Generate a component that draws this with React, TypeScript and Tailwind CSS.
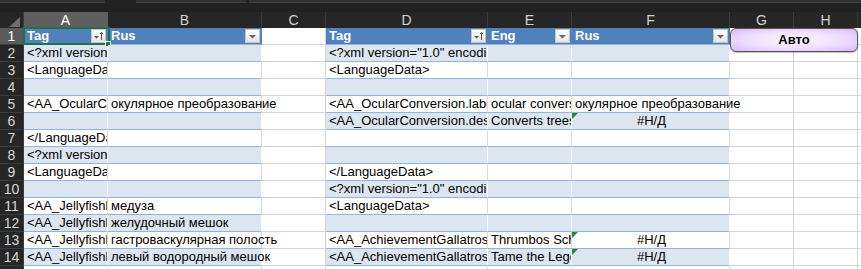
import React from 'react';

type Row = {
  a?: string;
  b?: string;
  d?: string;
  e?: string;
  f?: string;
  fOver?: boolean;
  fCenter?: boolean;
  tri?: boolean;
};

const XML = '<?xml version="1.0" encoding="utf-8"?>';

const rows: Row[] = [
  { a: XML, d: XML },
  { a: '<LanguageData>', d: '<LanguageData>' },
  {},
  {
    a: '<AA_OcularConversion.label>',
    b: 'окулярное преобразование',
    d: '<AA_OcularConversion.label>',
    e: 'ocular conversion',
    f: 'окулярное преобразование',
    fOver: true,
  },
  { d: '<AA_OcularConversion.description>', e: 'Converts trees into wood', f: '#Н/Д', fCenter: true, tri: true },
  { a: '</LanguageData>' },
  { a: XML },
  { a: '<LanguageData>', d: '</LanguageData>' },
  { d: XML },
  { a: '<AA_Jellyfishlike.label>', b: 'медуза', d: '<LanguageData>' },
  { a: '<AA_Jellyfishlike.label>', b: 'желудочный мешок' },
  {
    a: '<AA_Jellyfishlike.label>',
    b: 'гастроваскулярная полость',
    d: '<AA_AchievementGallatros.label>',
    e: 'Thrumbos Schmelly',
    f: '#Н/Д',
    fCenter: true,
    tri: true,
  },
  {
    a: '<AA_Jellyfishlike.label>',
    b: 'левый водородный мешок',
    d: '<AA_AchievementGallatros.label>',
    e: 'Tame the Legend',
    f: '#Н/Д',
    fCenter: true,
    tri: true,
  },
  {},
];

type Kind = 'head' | 'band' | 'plain' | 'out';

const kindCls: Record<Kind, string> = {
  head: 'bg-[#4f81bd] text-white font-bold border-r-[#4f81bd] border-b-[#95b3d7]',
  band: 'bg-[#dce6f1] text-black border-r-white border-b-[#95b3d7]',
  plain: 'bg-white text-black border-r-[#dadada] border-b-[#95b3d7]',
  out: 'bg-white text-black border-r-[#d4d4d4] border-b-[#d4d4d4]',
};

function FilterBox({ sort }: { sort?: boolean }) {
  return (
    <div className="absolute right-[1px] top-[1px] w-[15px] h-[14px] border border-[#c4c4c4] bg-[linear-gradient(#ffffff,#e4e4e4)] flex items-center justify-center">
      {sort ? (
        <svg width="13" height="12" viewBox="0 0 13 12">
          <polygon points="2,6 7,6 4.5,8.5" fill="#555" />
          <line x1="9.5" y1="2.5" x2="9.5" y2="10" stroke="#555" strokeWidth="1" />
          <polyline points="8,4 9.5,2.3 11,4" fill="none" stroke="#555" strokeWidth="1" />
        </svg>
      ) : (
        <svg width="13" height="12" viewBox="0 0 13 12">
          <polygon points="3,5 10,5 6.5,8.5" fill="#666" />
        </svg>
      )}
    </div>
  );
}

function Cell({
  text,
  kind,
  over,
  center,
  tri,
  filter,
  sort,
  selected,
}: {
  text?: string;
  kind: Kind;
  over?: boolean;
  center?: boolean;
  tri?: boolean;
  filter?: boolean;
  sort?: boolean;
  selected?: boolean;
}) {
  return (
    <div
      className={
        'relative h-[17px] border-r border-b pl-[3px] pr-[1px] text-[13px] leading-[16px] whitespace-nowrap ' +
        kindCls[kind] +
        (over || selected ? ' overflow-visible z-10' : ' overflow-hidden') +
        (center ? ' text-center' : '')
      }
    >
      {text}
      {tri && (
        <svg className="absolute left-0 top-0" width="6" height="6" viewBox="0 0 6 6">
          <polygon points="0,0 6,0 0,6" fill="#1d8a3a" />
        </svg>
      )}
      {filter && <FilterBox sort={sort} />}
      {selected && (
        <>
          <div className="absolute left-[-1px] top-[-1px] w-[87px] h-[18px] border-2 border-[#217346] pointer-events-none" />
          <div className="absolute left-[81px] top-[13px] w-[6px] h-[6px] bg-[#217346] border border-white" />
        </>
      )}
    </div>
  );
}

const GRID = 'grid grid-cols-[24px_84px_154px_64px_162px_84px_158px_64px_64px_1fr]';
const letters = ['A', 'B', 'C', 'D', 'E', 'F', 'G', 'H'];

export default function App() {
  return (
    <div className="relative w-[861px] h-[269px] overflow-hidden bg-white font-['Liberation_Sans',Arial,sans-serif]">
      {/* top strip */}
      <div className="h-[12px] bg-[#212121] flex items-start">
        <div className="w-[105px] h-[3px] bg-[#2f2f2f] border-b border-[#3e3e3e]" />
        <div className="ml-[31px] w-[110px] h-[3px] bg-[#2f2f2f] border-b border-[#3e3e3e]" />
        <div className="ml-[3px] flex-1 h-[3px] bg-[#2f2f2f] border-b border-[#3e3e3e]" />
      </div>
      {/* column headers */}
      <div className={GRID + ' h-[16px] bg-[#262626]'}>
        <div className="relative h-[16px] border-r border-[#3b3b3b]">
          <svg className="absolute right-[3px] bottom-[1px]" width="11" height="10" viewBox="0 0 11 10">
            <polygon points="11,0 11,10 0,10" fill="#6e6e6e" />
          </svg>
        </div>
        {letters.map((l) => (
          <div
            key={l}
            className={
              'h-[16px] border-r text-center text-[14px] leading-[16px] ' +
              (l === 'A'
                ? 'bg-[#5f5f5f] text-white border-[#5f5f5f] border-b border-b-[#217346]'
                : 'text-[#d2d2d2] border-[#3b3b3b]')
            }
          >
            {l}
          </div>
        ))}
        <div className="h-[16px]" />
      </div>
      {/* row 1 */}
      <div className={GRID}>
        <div className="h-[17px] bg-[#5a5a5a] border-r border-b border-[#3b3b3b] text-center text-[14px] leading-[16px] text-white">
          1
        </div>
        <Cell text="Tag" kind="head" filter sort selected />
        <Cell text="Rus" kind="head" filter />
        <Cell kind="out" />
        <Cell text="Tag" kind="head" filter sort />
        <Cell text="Eng" kind="head" filter />
        <Cell text="Rus" kind="head" filter />
        <Cell kind="out" />
        <Cell kind="out" />
        <Cell kind="out" />
      </div>
      {rows.map((r, i) => {
        const n = i + 2;
        const band: Kind = n % 2 === 0 ? 'band' : 'plain';
        return (
          <div key={n} className={GRID}>
            <div className="h-[17px] bg-[#262626] border-r border-b border-[#3b3b3b] text-center text-[14px] leading-[16px] text-[#d6d6d6]">
              {n}
            </div>
            <Cell text={r.a} kind={band} />
            <Cell text={r.b} kind={band} over />
            <Cell kind="out" />
            <Cell text={r.d} kind={band} />
            <Cell text={r.e} kind={band} />
            <Cell text={r.f} kind={band} over={r.fOver} center={r.fCenter} tri={r.tri} />
            <Cell kind="out" />
            <Cell kind="out" />
            <Cell kind="out" />
          </div>
        );
      })}
      {/* Button overlay */}
      <div className="absolute left-[730px] top-[28px] w-[128px] h-[24px] rounded-[6px] border border-[#555555] bg-[radial-gradient(ellipse_at_center,#fbf6ff_0%,#efdfff_55%,#d9b6fb_100%)] flex items-center justify-center text-[13px] font-bold text-black shadow-[0_1px_1px_rgba(0,0,0,0.25)] z-30">
        Авто
      </div>
    </div>
  );
}
